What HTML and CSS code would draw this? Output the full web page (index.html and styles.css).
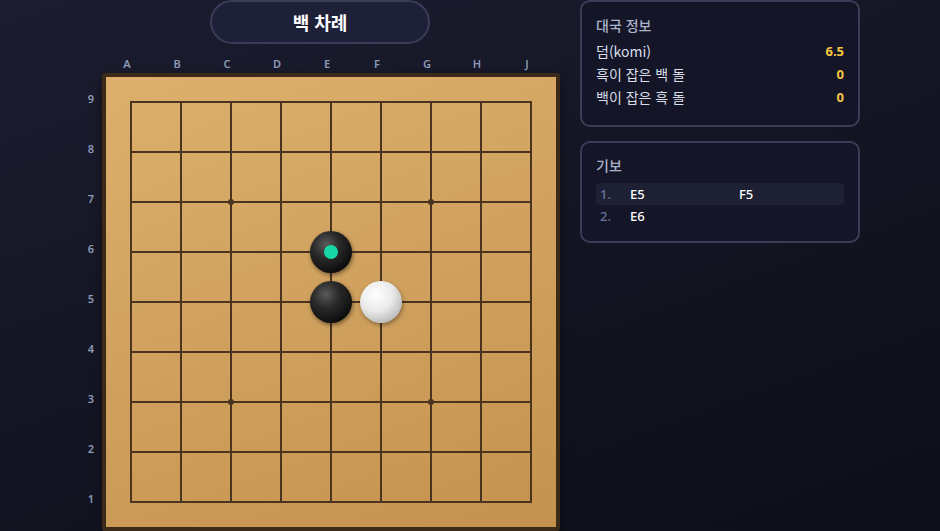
FILE: index.html
```html
<!DOCTYPE html>
<html lang="ko">
	<head>
		<meta charset="UTF-8" />
		<meta name="viewport" content="width=device-width, initial-scale=1.0" />
		<title>바둑</title>
		<link rel="stylesheet" href="styles.css">
	</head>
	<body>
		<div class="app">
			<div class="game">
				<div class="turn">백 차례</div>

				<div class="col-labels">
					<span>A</span><span>B</span><span>C</span><span>D</span><span>E</span>
					<span>F</span><span>G</span><span>H</span><span>J</span>
				</div>

				<div class="board-row">
					<div class="row-labels">
						<span>9</span><span>8</span><span>7</span><span>6</span><span>5</span>
						<span>4</span><span>3</span><span>2</span><span>1</span>
					</div>

					<div class="board">
						<svg class="grid" viewBox="0 0 450 450" width="450" height="450">
							<defs>
								<radialGradient id="blackStone" cx="38%" cy="32%" r="70%">
									<stop offset="0%" stop-color="#5a5a5a" />
									<stop offset="45%" stop-color="#2a2a2a" />
									<stop offset="100%" stop-color="#0c0c0c" />
								</radialGradient>
								<radialGradient id="whiteStone" cx="38%" cy="32%" r="70%">
									<stop offset="0%" stop-color="#ffffff" />
									<stop offset="55%" stop-color="#ebebeb" />
									<stop offset="100%" stop-color="#bdbdbd" />
								</radialGradient>
							</defs>

							<g class="lines">
								<line x1="25" y1="25" x2="425" y2="25" />
								<line x1="25" y1="75" x2="425" y2="75" />
								<line x1="25" y1="125" x2="425" y2="125" />
								<line x1="25" y1="175" x2="425" y2="175" />
								<line x1="25" y1="225" x2="425" y2="225" />
								<line x1="25" y1="275" x2="425" y2="275" />
								<line x1="25" y1="325" x2="425" y2="325" />
								<line x1="25" y1="375" x2="425" y2="375" />
								<line x1="25" y1="425" x2="425" y2="425" />
								<line x1="25" y1="25" x2="25" y2="425" />
								<line x1="75" y1="25" x2="75" y2="425" />
								<line x1="125" y1="25" x2="125" y2="425" />
								<line x1="175" y1="25" x2="175" y2="425" />
								<line x1="225" y1="25" x2="225" y2="425" />
								<line x1="275" y1="25" x2="275" y2="425" />
								<line x1="325" y1="25" x2="325" y2="425" />
								<line x1="375" y1="25" x2="375" y2="425" />
								<line x1="425" y1="25" x2="425" y2="425" />
							</g>

							<!-- star points -->
							<g class="stars">
								<circle cx="125" cy="125" r="3" />
								<circle cx="325" cy="125" r="3" />
								<circle cx="125" cy="325" r="3" />
								<circle cx="325" cy="325" r="3" />
							</g>

							<!-- stones -->
							<g class="stones">
								<circle class="stone black" cx="225" cy="175" r="21" />
								<circle class="stone black" cx="225" cy="225" r="21" />
								<circle class="stone white" cx="275" cy="225" r="21" />
								<circle class="last-move" cx="225" cy="175" r="7" />
							</g>
						</svg>
					</div>
				</div>
			</div>

			<div class="side">
				<div class="panel">
					<h3>대국 정보</h3>
					<div class="info-row">
						<span>덤(komi)</span>
						<span class="value">6.5</span>
					</div>
					<div class="info-row">
						<span>흑이 잡은 백 돌</span>
						<span class="value">0</span>
					</div>
					<div class="info-row">
						<span>백이 잡은 흑 돌</span>
						<span class="value">0</span>
					</div>
				</div>

				<div class="panel kibo">
					<h3>기보</h3>
					<div class="move-row odd">
						<span class="move-num">1.</span>
						<span>E5</span>
						<span>F5</span>
					</div>
					<div class="move-row">
						<span class="move-num">2.</span>
						<span>E6</span>
						<span></span>
					</div>
				</div>
			</div>
		</div>
	</body>
</html>
```

FILE: styles.css
```css
:root {
	--bg-top: #1b1c2f;
	--bg-bottom: #0d0e17;
	--panel-bg: #141627;
	--panel-border: #3a3d58;
	--text-color: #d9deea;
	--muted-color: #aab3ca;
	--label-color: #8d9bb7;
	--accent-color: #f6c443;
	--wood-light: #dcb06c;
	--wood-dark: #c4924f;
	--wood-edge: #3b2a17;
	--line-color: #4a3420;
}
body {
	font-family: "Noto Sans", "Noto Sans CJK KR", sans-serif;
	background: linear-gradient(160deg, var(--bg-top), var(--bg-bottom));
	color: var(--text-color);
	margin: 0;
	padding: 0;
	height: 100vh;
	overflow: hidden;
}
.app {
	display: flex;
	justify-content: center;
	align-items: flex-start;
	gap: 20px;
}
.game {
	width: 480px;
	display: flex;
	flex-direction: column;
}
.turn {
	width: 216px;
	height: 40px;
	margin: 0 auto;
	border: 2px solid var(--panel-border);
	border-radius: 22px;
	background-color: #1e2038;
	color: #ffffff;
	font-family: "Noto Sans CJK KR", sans-serif;
	font-size: 18px;
	font-weight: bold;
	display: flex;
	align-items: center;
	justify-content: center;
}
.col-labels {
	display: flex;
	height: 20px;
	margin: 9px 0 0 22px;
}
.col-labels span,
.row-labels span {
	color: var(--label-color);
	font-size: 11px;
	font-weight: 600;
	display: flex;
	align-items: center;
	justify-content: center;
}
.col-labels span {
	width: 50px;
}
.board-row {
	display: flex;
}
.row-labels {
	width: 22px;
	display: flex;
	flex-direction: column;
}
.row-labels span {
	height: 50px;
}
.board {
	width: 450px;
	height: 450px;
	border: 4px solid var(--wood-edge);
	border-radius: 3px;
	background: linear-gradient(160deg, var(--wood-light), var(--wood-dark));
	box-shadow: 0 4px 10px rgba(0, 0, 0, 0.4);
}
.grid {
	display: block;
}
.lines line {
	stroke: var(--line-color);
	stroke-width: 2;
	stroke-linecap: square;
}
.stars circle {
	fill: var(--line-color);
}
.stone.black {
	fill: url(#blackStone);
	filter: drop-shadow(1px 2px 2px rgba(0, 0, 0, 0.45));
}
.stone.white {
	fill: url(#whiteStone);
	filter: drop-shadow(1px 2px 2px rgba(0, 0, 0, 0.35));
}
.last-move {
	fill: #17d6a6;
}

.side {
	width: 280px;
	display: flex;
	flex-direction: column;
	gap: 14px;
}
.panel {
	background-color: var(--panel-bg);
	border: 2px solid var(--panel-border);
	border-radius: 10px;
	padding: 13px 14px 16px;
	font-family: "Noto Sans CJK KR", sans-serif;
}
.panel h3 {
	margin: 0 0 5px;
	font-size: 14px;
	line-height: 20px;
	font-weight: 500;
	color: var(--muted-color);
}
.info-row {
	display: flex;
	justify-content: space-between;
	font-size: 14px;
	line-height: 23px;
}
.info-row .value {
	color: var(--accent-color);
	font-family: "Noto Sans", sans-serif;
	font-size: 13px;
	font-weight: bold;
}
.kibo {
	padding-top: 12px;
	padding-bottom: 14px;
}
.kibo h3 {
	margin-bottom: 8px;
}
.move-row {
	display: grid;
	grid-template-columns: 30px 109px 1fr;
	padding: 0 4px;
	height: 22px;
	align-items: center;
	border-radius: 4px;
	font-family: "Noto Sans", sans-serif;
	font-size: 13px;
	color: #ffffff;
	font-weight: 500;
}
.move-row.odd {
	background-color: #1e2133;
}
.move-num {
	color: #65739a;
}
```
